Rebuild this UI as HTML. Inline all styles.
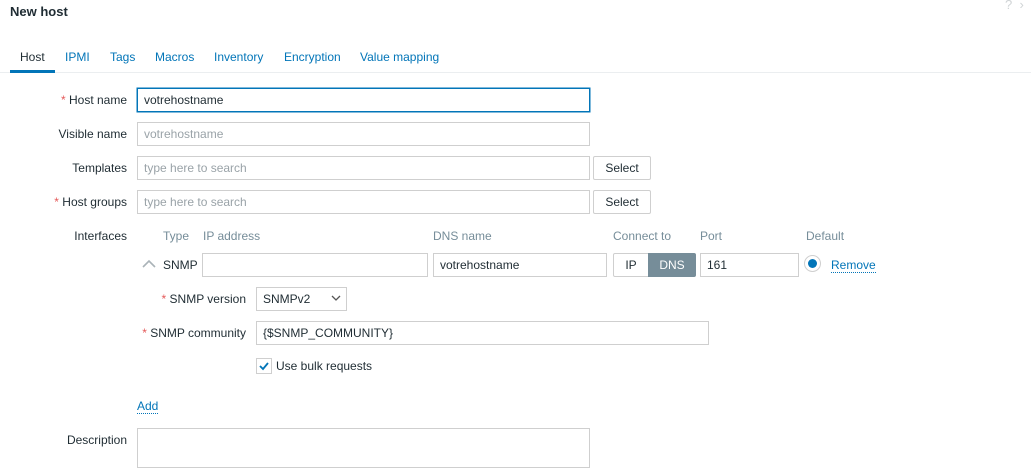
<!DOCTYPE html><html><head><style>
body{margin:0;width:1031px;height:461px;background:#fff;font-family:"Liberation Sans",Arial,sans-serif;font-size:12px;color:#1f2c33;position:relative;overflow:hidden}
.a{position:absolute}
.lbl{position:absolute;text-align:right;width:127px;left:0;line-height:23px;margin-top:1px}
.r{color:#e45959}
.in{position:absolute;border:1px solid #cfcfcf;box-sizing:border-box;height:24px;line-height:22px;padding-left:6px;background:#fff}
.ph{color:#9aa3a8}
.btn{position:absolute;border:1px solid #cfcfcf;box-sizing:border-box;height:24px;line-height:22px;text-align:center;background:#fff;border-radius:2px}
.hd{position:absolute;color:#768d99;top:229px}
.tab{position:absolute;top:50px;color:#0275b8}
</style></head><body>
<div class="a" style="left:10px;top:4px;font-size:13px;font-weight:bold;color:#1f2c33">New host</div>
<div class="a" style="left:1005px;top:-3px;color:#d0d4d6;font-size:13px">?&nbsp;&nbsp;›</div>
<div class="a" style="left:0;top:72px;width:1031px;height:1px;background:#ebeef0"></div>
<div class="a" style="left:10px;top:70px;width:45px;height:3px;background:#0275b8"></div>
<div class="tab" style="left:20px;color:#1f2c33">Host</div>
<div class="tab" style="left:65px">IPMI</div>
<div class="tab" style="left:110px">Tags</div>
<div class="tab" style="left:155px">Macros</div>
<div class="tab" style="left:214px">Inventory</div>
<div class="tab" style="left:284px">Encryption</div>
<div class="tab" style="left:360px">Value mapping</div>

<div class="lbl" style="top:88px"><span class="r">*</span> Host name</div>
<div class="in" style="left:137px;top:88px;width:453px;border-color:#0275b8;border-width:1px;box-shadow:0 0 0 0.5px #0275b8">votrehostname</div>
<div class="lbl" style="top:122px">Visible name</div>
<div class="in ph" style="left:137px;top:122px;width:453px">votrehostname</div>
<div class="lbl" style="top:156px">Templates</div>
<div class="in ph" style="left:137px;top:156px;width:453px">type here to search</div>
<div class="btn" style="left:593px;top:156px;width:58px">Select</div>
<div class="lbl" style="top:190px"><span class="r">*</span> Host groups</div>
<div class="in ph" style="left:137px;top:190px;width:453px">type here to search</div>
<div class="btn" style="left:593px;top:190px;width:58px">Select</div>

<div class="lbl" style="top:224px">Interfaces</div>
<div class="hd" style="left:163px">Type</div>
<div class="hd" style="left:203px">IP address</div>
<div class="hd" style="left:433px">DNS name</div>
<div class="hd" style="left:613px">Connect to</div>
<div class="hd" style="left:700px">Port</div>
<div class="hd" style="left:806px">Default</div>
<svg class="a" style="left:142px;top:259px" width="14" height="10"><path d="M1 8 L7 2 L13 8" fill="none" stroke="#aab3b8" stroke-width="1.6"/></svg>
<div class="a" style="left:163px;top:258px">SNMP</div>
<div class="in" style="left:202px;top:253px;width:226px"></div>
<div class="in" style="left:433px;top:253px;width:174px">votrehostname</div>
<div class="btn" style="left:613px;top:253px;width:36px;border-radius:2px 0 0 2px">IP</div>
<div class="btn" style="left:648px;top:253px;width:48px;background:#768d99;border-color:#768d99;color:#fff;border-radius:0 2px 2px 0">DNS</div>
<div class="in" style="left:700px;top:253px;width:99px">161</div>
<div class="a" style="left:804px;top:255px;width:17px;height:17px;border:1px solid #cfcfcf;border-radius:50%;box-sizing:border-box"></div>
<div class="a" style="left:808px;top:259px;width:9px;height:9px;border-radius:50%;background:#0275b8"></div>
<div class="a" style="left:831px;top:258px;color:#0275b8;border-bottom:1px dotted #0275b8;line-height:14px">Remove</div>

<div class="a" style="left:100px;top:288px;width:146px;text-align:right;line-height:23px"><span class="r">*</span> SNMP version</div>
<div class="in" style="left:256px;top:287px;width:91px">SNMPv2</div>
<svg class="a" style="left:331px;top:295px" width="10" height="7"><path d="M1 1 L5 5 L9 1" fill="none" stroke="#555" stroke-width="1.3"/></svg>
<div class="a" style="left:100px;top:322px;width:146px;text-align:right;line-height:23px"><span class="r">*</span> SNMP community</div>
<div class="in" style="left:256px;top:321px;width:453px">{$SNMP_COMMUNITY}</div>
<div class="a" style="left:256px;top:358px;width:16px;height:16px;border:1px solid #cfcfcf;box-sizing:border-box"></div>
<svg class="a" style="left:258px;top:360px" width="12" height="12"><path d="M2 6 L5 9 L10 3" fill="none" stroke="#0275b8" stroke-width="1.8"/></svg>
<div class="a" style="left:276px;top:359px">Use bulk requests</div>

<div class="a" style="left:137px;top:399px;color:#0275b8;border-bottom:1px dotted #0275b8;line-height:14px">Add</div>
<div class="lbl" style="top:428px">Description</div>
<div class="in" style="left:137px;top:428px;width:453px;height:40px"></div>
</body></html>
